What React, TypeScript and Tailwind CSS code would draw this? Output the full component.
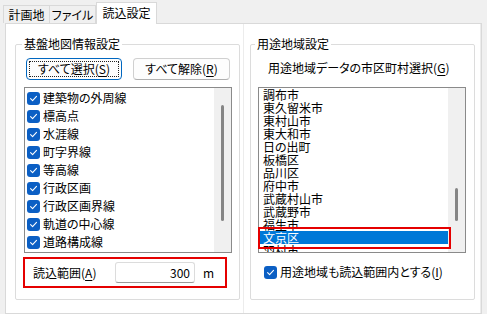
import React from "react";

const leftItems = [
  "建築物の外周線",
  "標高点",
  "水涯線",
  "町字界線",
  "等高線",
  "行政区画",
  "行政区画界線",
  "軌道の中心線",
  "道路構成線",
];

const cities = [
  "調布市",
  "東久留米市",
  "東村山市",
  "東大和市",
  "日の出町",
  "板橋区",
  "品川区",
  "府中市",
  "武蔵村山市",
  "武蔵野市",
  "福生市",
  "文京区",
];

const Check: React.FC = () => (
  <span className="flex h-[13px] w-[13px] shrink-0 items-center justify-center rounded-[3px] bg-[#0b5fc4]">
    <svg width="9" height="9" viewBox="0 0 9 9" fill="none">
      <path d="M1.6 4.7 L3.6 6.6 L7.5 2.3" stroke="white" strokeWidth="1.1" strokeLinecap="round" strokeLinejoin="round" />
    </svg>
  </span>
);

const Key: React.FC<{ k: string }> = ({ k }) => (
  <span>
    (<span className="underline underline-offset-2">{k}</span>)
  </span>
);

const App: React.FC = () => {
  return (
    <div className="flex h-[314px] w-[487px] flex-col overflow-hidden bg-[#f0f0f0] font-['Noto_Sans_CJK_JP',sans-serif] text-[12px] leading-[16px] text-black [font-feature-settings:'palt']">
      {/* tabs */}
      <div className="flex h-[23px] shrink-0 items-end pl-[3px]">
        <div className="flex h-[18px] w-[47px] items-center justify-center whitespace-nowrap border border-b-0 border-[#d9d9d9] bg-[#f0f0f0] pt-[1px]">
          計画地
        </div>
        <div className="flex h-[18px] w-[46px] items-center justify-center whitespace-nowrap border border-b-0 border-l-0 border-[#d9d9d9] bg-[#f0f0f0] pt-[1px]">
          ファイル
        </div>
        <div className="relative z-10 -mb-px flex h-[22px] w-[61px] items-center justify-center whitespace-nowrap border border-b-0 border-[#d9d9d9] bg-white pb-[2px]">
          読込設定
        </div>
      </div>

      {/* panel */}
      <div className="ml-[5px] flex w-[477px] flex-1 border border-[#d9d9d9] bg-white">
        <div className="pl-[9px] pt-[12px]">
          <fieldset className="h-[264px] w-[225px] rounded-[2px] border border-[#dcdcdc]">
            <legend className="ml-[6px] px-[2px]">基盤地図情報設定</legend>
            <div className="ml-[10px] mt-[6px] flex gap-[11px]">
              <div className="h-[22px] w-[96px] rounded-[4px] border border-[#0067c0] bg-[#fdfdfd] p-[2px]">
                <div className="flex h-full w-full items-center justify-center border border-dotted border-[#222]">
                  すべて選択<Key k="S" />
                </div>
              </div>
              <div className="flex h-[22px] w-[97px] items-center justify-center rounded-[4px] border border-[#d0d0d0] border-b-[#b0b0b0] bg-[#fdfdfd]">
                すべて解除<Key k="R" />
              </div>
            </div>
            <div className="ml-[8px] mt-[7px] flex h-[166px] w-[208px] border border-[#8a8a8a]">
              <div className="flex flex-1 flex-col pt-[1px]">
                {leftItems.map((t) => (
                  <div key={t} className="flex h-[18px] items-center gap-[3px] pl-[2px]">
                    <Check />
                    <span>{t}</span>
                  </div>
                ))}
              </div>
              <div className="flex w-[17px] justify-center bg-[#f0f0f0]">
                <div className="mt-[17px] h-[116px] w-[3px] rounded-full bg-[#858585]" />
              </div>
            </div>
            <div className="ml-[7px] mt-[4px] flex h-[31px] w-[204px] items-center border-2 border-[#e50000] pl-[8px]">
              <span className="w-[82px]">
                読込範囲<Key k="A" />
              </span>
              <div className="flex h-[21px] w-[80px] items-center justify-end rounded-[3px] border border-[#dcdcdc] border-b-[#9a9a9a] pr-[4px]">
                300
              </div>
              <span className="ml-[8px]">m</span>
            </div>
          </fieldset>
        </div>

        <div className="ml-[3px] w-px self-stretch bg-[#ececec]" />

        <div className="pl-[6px] pt-[12px]">
          <fieldset className="h-[264px] w-[225px] rounded-[2px] border border-[#dcdcdc]">
            <legend className="ml-[4px] px-[2px]">用途地域設定</legend>
            <div className="ml-[17px] mt-[8px]">
              用途地域データの市区町村選択<Key k="G" />
            </div>
            <div className="ml-[7px] mt-[11px] flex h-[166px] w-[208px] border border-[#8a8a8a]">
              <div className="flex flex-1 flex-col">
                {cities.map((c) => (
                  <div
                    key={c}
                    className={`relative ml-px flex h-[13px] shrink-0 items-center pl-[3px] leading-[13px] ${
                      c === "文京区" ? "bg-[#0078d7] text-white" : ""
                    }`}
                  >
                    {c}
                    {c === "文京区" && (
                      <div className="absolute -bottom-[5px] -left-[2px] -right-[3px] -top-[4px] z-10 border-2 border-[#e50000]" />
                    )}
                  </div>
                ))}
                <div className="ml-px h-[8px] shrink-0 overflow-hidden pl-[3px] leading-[13px]">羽村市</div>
              </div>
              <div className="flex w-[17px] justify-center bg-[#f0f0f0]">
                <div className="mt-[100px] h-[33px] w-[3px] rounded-full bg-[#858585]" />
              </div>
            </div>
            <div className="ml-[13px] mt-[11px] flex items-center gap-[3px]">
              <Check />
              <span>
                用途地域も読込範囲内とする<Key k="I" />
              </span>
            </div>
          </fieldset>
        </div>

        <div className="ml-[5px] w-px self-stretch bg-[#ececec]" />
      </div>
    </div>
  );
};

export default App;
